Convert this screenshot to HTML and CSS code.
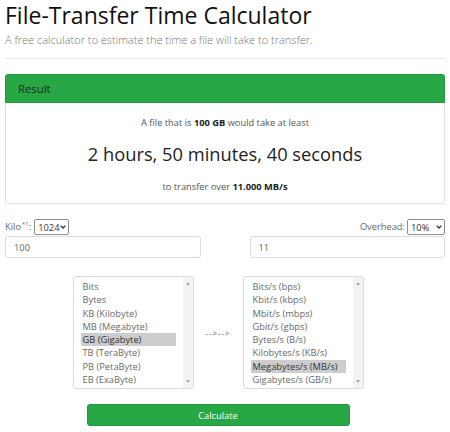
FILE: index.html
```html
<!DOCTYPE html>
<html lang="en">
<head>
<meta charset="utf-8">
<title>File-Transfer Time Calculator</title>
<link rel="stylesheet" href="styles.css">
</head>
<body>
<div class="page">
  <h1 class="title">File-Transfer Time Calculator</h1>
  <p class="lead">A free calculator to estimate the time a file will take to transfer.</p>
  <hr class="rule">

  <section class="card">
    <div class="card-header">Result</div>
    <div class="card-body">
      <p class="line">A file that is <b>100 GB</b> would take at least</p>
      <p class="big">2 hours, 50 minutes, 40 seconds</p>
      <p class="line line-last">to transfer over <b>11.000 MB/s</b></p>
    </div>
  </section>

  <div class="inputs">
    <div class="field">
      <div class="label-row">
        <span class="label">Kilo<sup class="sup">*1</sup>:</span>
        <span class="select select-kilo">1024<svg class="chev" width="6" height="4" viewBox="0 0 6 4"><polyline points="0.6,0.6 3,3 5.4,0.6" fill="none" stroke="#333" stroke-width="1.3"/></svg></span>
      </div>
      <input class="text-input" type="text" value="100">
    </div>
    <div class="field">
      <div class="label-row label-row-right">
        <span class="label">Overhead:</span>
        <span class="select select-over">10%<svg class="chev" width="6" height="4" viewBox="0 0 6 4"><polyline points="0.6,0.6 3,3 5.4,0.6" fill="none" stroke="#333" stroke-width="1.3"/></svg></span>
      </div>
      <input class="text-input" type="text" value="11">
    </div>
  </div>

  <div class="lower">
    <div class="lists">
      <div class="listbox">
        <ul class="options">
          <li>Bits</li>
          <li>Bytes</li>
          <li>KB (Kilobyte)</li>
          <li>MB (Megabyte)</li>
          <li class="selected">GB (Gigabyte)</li>
          <li>TB (TeraByte)</li>
          <li>PB (PetaByte)</li>
          <li>EB (ExaByte)</li>
        </ul>
        <div class="scrollbar"><span class="arrow-up"></span><span class="arrow-down"></span></div>
      </div>
      <div class="arrows">--&gt;--&gt;</div>
      <div class="listbox">
        <ul class="options">
          <li>Bits/s (bps)</li>
          <li>Kbit/s (kbps)</li>
          <li>Mbit/s (mbps)</li>
          <li>Gbit/s (gbps)</li>
          <li>Bytes/s (B/s)</li>
          <li>Kilobytes/s (KB/s)</li>
          <li class="selected">Megabytes/s (MB/s)</li>
          <li>Gigabytes/s (GB/s)</li>
        </ul>
        <div class="scrollbar"><span class="arrow-up"></span><span class="arrow-down"></span></div>
      </div>
    </div>
    <button class="button" type="button">Calculate</button>
  </div>
</div>
</body>
</html>
```

FILE: styles.css
```css
* { box-sizing: border-box; }

html, body {
  margin: 0;
  padding: 0;
  background: #ffffff;
}

body {
  font-family: "Open Sans", "Noto Sans", "Liberation Sans", sans-serif;
  font-size: 9.3px;
  color: #555;
}

.page {
  padding: 0 5px;
}

.title {
  margin: 0;
  padding-top: 3px;
  font-size: 23px;
  line-height: 25px;
  font-weight: 500;
  color: #111;
}

.lead {
  margin: 5px 0 0;
  font-size: 11px;
  line-height: 14px;
  font-weight: 300;
  color: #777;
}

.rule {
  margin: 11px 0 0;
  height: 0;
  border: 0;
  border-top: 1px solid #e8e8e8;
}

.card {
  margin-top: 15px;
  border: 1px solid #e0e0e0;
  border-radius: 3px;
}

.card-header {
  margin: -1px -1px 0;
  background: #28a745;
  border: 1px solid #23963e;
  border-radius: 3px 3px 0 0;
  padding-left: 12px;
  font-size: 11.3px;
  line-height: 27px;
  color: #1d2b20;
}

.card-body {
  padding: 13px 10px 9px;
  text-align: center;
}

.line {
  margin: 0;
  line-height: 14px;
  color: #555;
}

.line b {
  color: #222;
  font-weight: 700;
}

.big {
  margin: 11px 0 0;
  font-size: 18.3px;
  line-height: 26px;
  color: #222;
}

.line-last {
  margin-top: 13px;
}

.inputs {
  margin-top: 15px;
  display: grid;
  grid-template-columns: 1fr 1fr;
  column-gap: 49px;
}

.label-row {
  height: 16px;
  display: flex;
  align-items: center;
  gap: 3px;
}

.label-row-right {
  justify-content: flex-end;
  gap: 2px;
}

.label {
  color: #666;
  line-height: 16px;
}

.sup {
  font-size: 6px;
  vertical-align: 4px;
  line-height: 0;
  margin-left: 1px;
}

.select {
  height: 16px;
  display: flex;
  align-items: center;
  justify-content: space-between;
  border: 1px solid #8f8f8f;
  border-radius: 2px;
  padding: 0 2px 0 3px;
  color: #333;
  font-size: 9.3px;
}

.select-kilo { width: 35px; }
.select-over { width: 38px; }

.chev { display: block; }

.text-input {
  display: block;
  width: 100%;
  height: 22px;
  margin: 1px 0 0;
  padding: 0 8px;
  border: 1px solid #dcdcdc;
  border-radius: 3px;
  font-family: inherit;
  font-size: 9.3px;
  color: #666;
  background: #fff;
  outline: none;
}

.lower {
  width: 426px;
  margin-top: 18px;
  display: flex;
  flex-direction: column;
  align-items: center;
}

.lists {
  display: flex;
  align-items: center;
}

.listbox {
  width: 121px;
  height: 113px;
  border: 1px solid #dcdcdc;
  border-radius: 3px;
  display: flex;
  justify-content: space-between;
  overflow: hidden;
}

.options {
  list-style: none;
  margin: 0;
  padding: 3px 0 0 7px;
  width: 102px;
}

.options li {
  height: 13.3px;
  line-height: 13.3px;
  padding-left: 2px;
  color: #6a6a6a;
  white-space: nowrap;
}

.options li.selected {
  background: #cdcdcd;
  color: #333;
}

.scrollbar {
  position: relative;
  width: 10px;
  background: #f3f3f3;
}

.arrow-up, .arrow-down {
  position: absolute;
  left: 3px;
  width: 0;
  height: 0;
  border-left: 2px solid transparent;
  border-right: 2px solid transparent;
}

.arrow-up {
  top: 5px;
  border-bottom: 3px solid #a9a9a9;
}

.arrow-down {
  bottom: 5px;
  border-top: 3px solid #a9a9a9;
}

.arrows {
  width: 49px;
  text-align: center;
  font-size: 8px;
  letter-spacing: 0.9px;
  color: #555;
}

.button {
  margin-top: 15px;
  width: 263px;
  height: 22px;
  padding: 0;
  background: #28a745;
  border: 1px solid #23963e;
  border-radius: 3px;
  color: #fff;
  font-family: inherit;
  font-size: 9.3px;
}
```
